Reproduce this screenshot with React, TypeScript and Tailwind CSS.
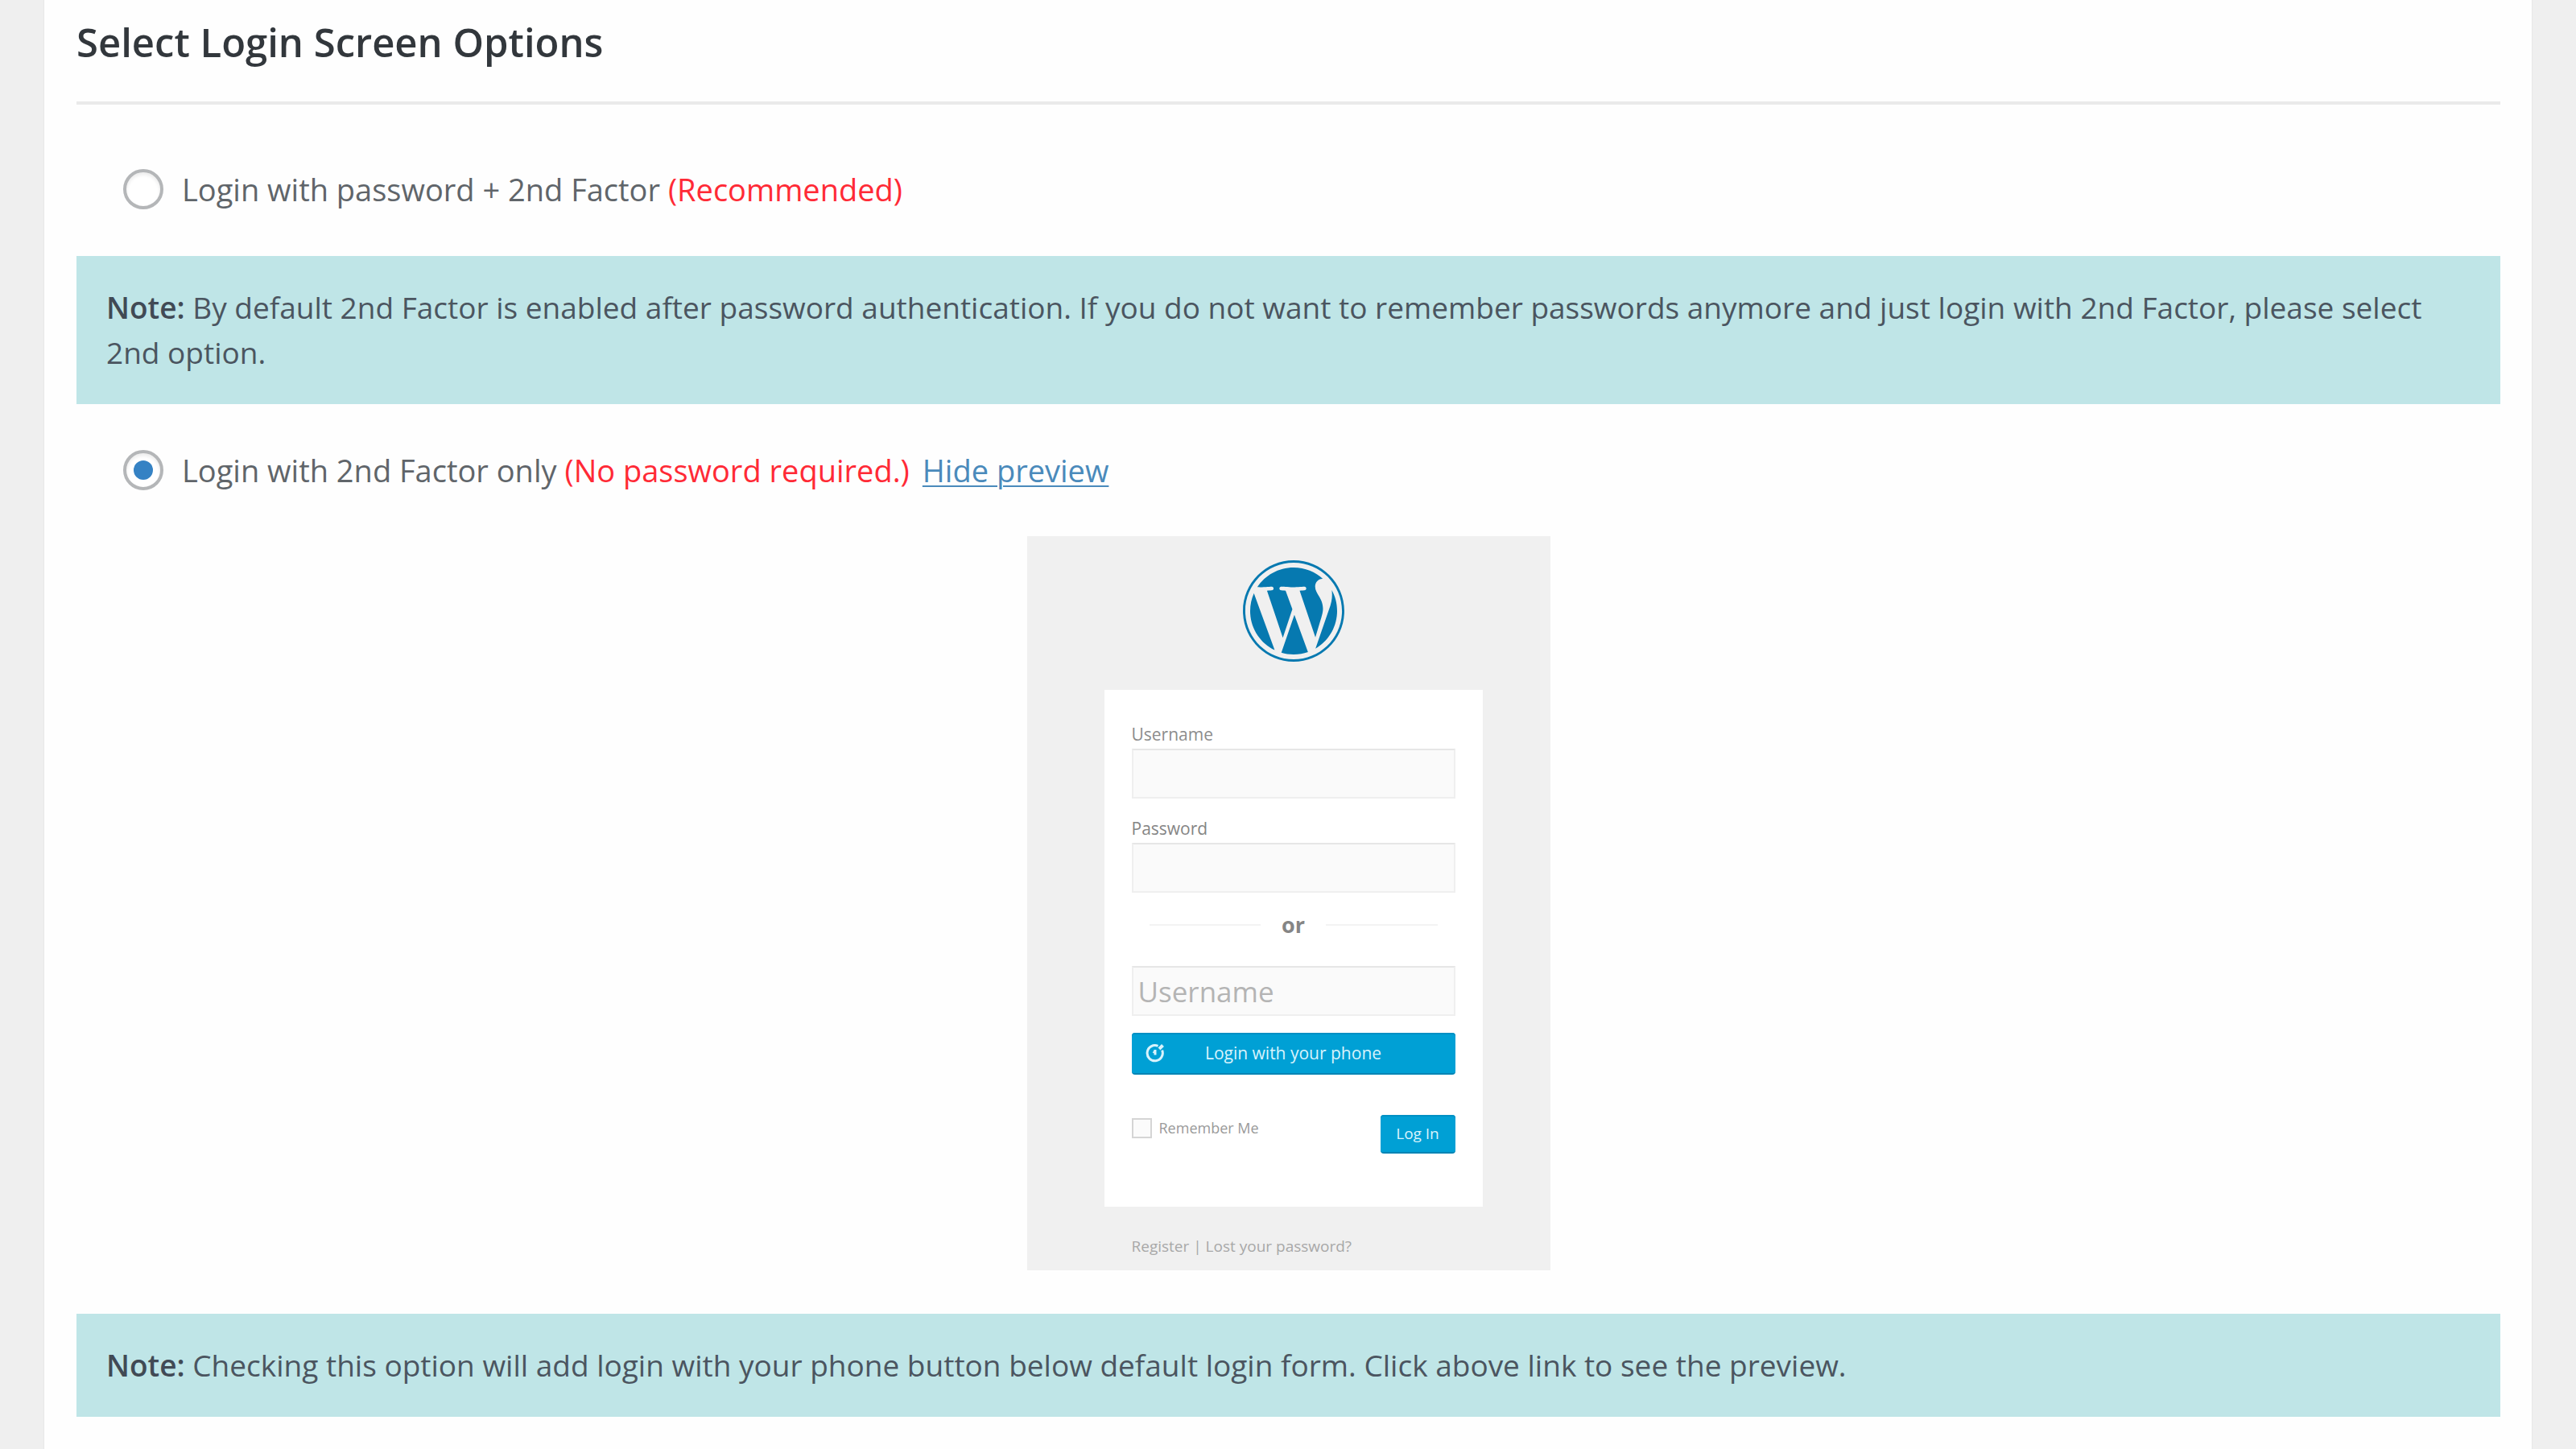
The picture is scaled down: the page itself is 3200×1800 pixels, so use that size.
import { useState, type ReactNode } from 'react';
import { FaWordpress } from 'react-icons/fa';

function Note({ children }: { children: ReactNode }) {
  return (
    <p className="bg-[#bfe5e7] px-[37px] py-[36px] text-[37px] leading-[56px] text-[#4b5560]">
      <strong className="font-semibold text-[#414a55]">Note:</strong> {children}
    </p>
  );
}

function Option({
  id,
  checked,
  onSelect,
  label,
  hint,
  children,
}: {
  id: string;
  checked: boolean;
  onSelect: () => void;
  label: string;
  hint: string;
  children?: ReactNode;
}) {
  return (
    <div className="flex items-center pl-[58px] text-[38px] leading-[56px] text-[#60656a]">
      <input
        id={id}
        type="radio"
        name="login-option"
        checked={checked}
        onChange={onSelect}
        className="mr-[23px] grid size-[50px] shrink-0 appearance-none place-items-center rounded-full border-4 border-[#b4b6b8] bg-white shadow-[inset_0_3px_4px_rgba(0,0,0,0.08)] before:size-6 before:rounded-full before:bg-transparent checked:before:bg-[#3582c4]"
      />
      <label htmlFor={id}>
        {label} <span className="text-[#ff2a36]">{hint}</span>
      </label>
      {children}
    </div>
  );
}

function TimerIcon() {
  return (
    <svg viewBox="0 0 24 24" className="size-6" fill="none" stroke="currentColor" aria-hidden="true">
      <path d="M20.6 8.6A9.6 9.6 0 1 1 15.5 3.4" strokeWidth="3" />
      <path d="M17 7l4.500-4.500" strokeWidth="4" />
      <path d="M12 8v6.500" strokeWidth="3" />
      <path d="M9.500 12l2.500-3.500" strokeWidth="2" />
    </svg>
  );
}

const field =
  'block h-[62px] w-full border-2 border-[#efefef] border-t-[#e6e6e6] bg-[#fafafa] px-[6px] text-[35px] text-[#777] placeholder:text-[#b4b4b4]';
const blueButton =
  'rounded-[4px] border-b-2 border-[#0084b4] bg-[#00a0d5] leading-[28px] text-[#d9f3fc] shadow-[inset_0_2px_0_#0090c4]';

function LoginPreview() {
  return (
    <div className="mx-auto w-[650px] bg-[#f0f0f0] pt-[28px] pr-[84px] pb-[16px] pl-[96px]">
      <FaWordpress className="mx-auto size-[130px]" color="#0679b0" aria-label="WordPress" />
      <form className="mt-[33px] h-[642px] bg-white px-[34px] pt-[41px]" onSubmit={(e) => e.preventDefault()}>
        <label htmlFor="user" className="mb-[4px] block text-[21px] leading-[28px] text-[#8c8c8c]">
          Username
        </label>
        <input id="user" type="text" className={field} />
        <label htmlFor="pass" className="mt-[23px] mb-[4px] block text-[21px] leading-[28px] text-[#858585]">
          Password
        </label>
        <input id="pass" type="password" className={field} />
        <div className="mt-[22px] flex items-center gap-[26px] px-[22px] text-[27px] leading-[36px] font-bold text-[#858585]">
          <span className="h-[2px] flex-1 bg-[#f3f3f3]" />
          or
          <span className="h-[2px] flex-1 bg-[#f3f3f3]" />
        </div>
        <input type="text" placeholder="Username" aria-label="Username for phone login" className={`mt-[33px] ${field}`} />
        <button
          type="submit"
          className={`mt-[21px] grid h-[52px] w-full grid-cols-[40px_1fr_40px] items-center px-[17px] text-[21px] ${blueButton}`}
        >
          <TimerIcon />
          Login with your phone
        </button>
        <div className="mt-[50px] flex items-start justify-between">
          <label className="flex items-center gap-[9px] pt-[2px] text-[18px] leading-[28px] text-[#9a9a9a]">
            <input type="checkbox" className="size-[25px] appearance-none border-2 border-[#d5d5d5] bg-[#fbfbfb]" />
            Remember Me
          </label>
          <button type="submit" className={`h-[48px] w-[93px] text-[19px] ${blueButton}`}>
            Log In
          </button>
        </div>
      </form>
      <p className="mt-[35px] px-[34px] text-[19px] leading-[28px] text-[#a8a8a8]">
        <a href="#register">Register</a> | <a href="#lost">Lost your password?</a>
      </p>
    </div>
  );
}

export default function App() {
  const [option, setOption] = useState('second');
  const [preview, setPreview] = useState(true);
  return (
    <div className="min-h-screen bg-[#efefef] px-[54px] font-['Open_Sans','Noto_Sans',sans-serif]">
      <main className="min-h-screen border-x border-[#e8e8e8] bg-[#fefefe] pr-[39px] pb-[40px] pl-[40px]">
        <h1 className="border-b-4 border-[#eaeaea] pt-[16px] pb-[38px] text-[49px] leading-[72px] font-semibold text-[#32373c]">
          Select Login Screen Options
        </h1>
        <div className="pt-[77px] pb-[55px]">
          <Option
            id="both"
            checked={option === 'both'}
            onSelect={() => setOption('both')}
            label="Login with password + 2nd Factor"
            hint="(Recommended)"
          />
        </div>
        <Note>
          By default 2nd Factor is enabled after password authentication. If you do not want to remember passwords
          anymore and just login with 2nd Factor, please select 2nd option.
        </Note>
        <div className="pt-[54px] pb-[54px]">
          <Option
            id="second"
            checked={option === 'second'}
            onSelect={() => setOption('second')}
            label="Login with 2nd Factor only"
            hint="(No password required.)"
          >
            <a
              href="#preview"
              onClick={() => setPreview(!preview)}
              className="ml-[16px] text-[#4a8abb] underline decoration-2 underline-offset-4"
            >
              Hide preview
            </a>
          </Option>
        </div>
        {preview && <LoginPreview />}
        <div className="mt-[54px]">
          <Note>
            Checking this option will add login with your phone button below default login form. Click above link to see
            the preview.
          </Note>
        </div>
      </main>
    </div>
  );
}
